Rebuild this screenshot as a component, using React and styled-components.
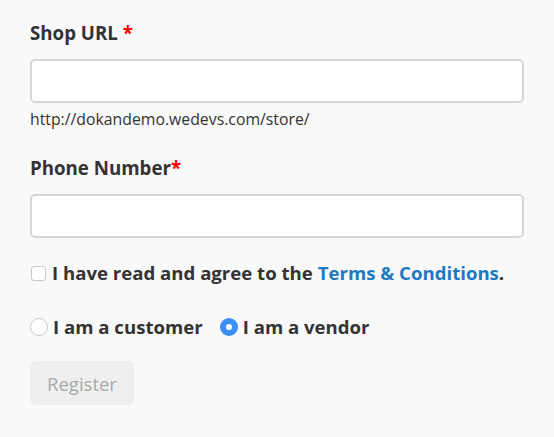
import React from "react";
import styled, { createGlobalStyle } from "styled-components";

const GlobalStyle = createGlobalStyle`
    html, body {
        margin: 0;
        padding: 0;
        background: #f9f9f9;
    }
    body {
        font-family: "Open Sans", "Liberation Sans", sans-serif;
        color: #333;
    }
`;

const Form = styled.form`
    padding: 20px 30px 0 30px;
    width: 494px;
`;

const Field = styled.div`
    margin-bottom: ${(p) => p.gap || 0}px;
`;

const Label = styled.label`
    display: block;
    font-size: 18.7px;
    font-weight: 700;
    line-height: 26px;
    color: #333;
    margin-bottom: 13px;
`;

const Required = styled.span`
    color: #f00;
    margin-left: ${(p) => (p.spaced ? "5px" : "0")};
`;

const Input = styled.input`
    display: block;
    box-sizing: border-box;
    width: 494px;
    height: 44px;
    border: 2px solid #d6d6d6;
    border-radius: 5px;
    background: #fff;
    font: inherit;
    padding: 0 10px;
    outline: none;
`;

const Hint = styled.div`
    font-size: 15.8px;
    line-height: 20px;
    margin-top: 6px;
    color: #333;
`;

const CheckRow = styled.label`
    display: flex;
    align-items: center;
    font-size: 18.6px;
    font-weight: 700;
    line-height: 26px;
    color: #333;
    margin-bottom: ${(p) => p.gap || 0}px;
`;

const Box = styled.span`
    box-sizing: border-box;
    width: 15px;
    height: 15px;
    border: 1.5px solid #c8c8c8;
    border-radius: 3px;
    background: #fff;
    margin: 1px 6px 0 1px;
    flex-shrink: 0;
`;

const Radio = styled.span`
    box-sizing: border-box;
    width: 18px;
    height: 18px;
    border-radius: 50%;
    flex-shrink: 0;
    margin-right: 5px;
    background: ${(p) => (p.checked ? "#3a8ef6" : "#fff")};
    border: ${(p) => (p.checked ? "none" : "1.5px solid #c8c8c8")};
    display: flex;
    align-items: center;
    justify-content: center;
    &::after {
        content: "";
        display: ${(p) => (p.checked ? "block" : "none")};
        width: 6px;
        height: 6px;
        border-radius: 50%;
        background: #fff;
    }
`;

const RadioGroup = styled.div`
    display: flex;
    align-items: center;
    gap: 17px;
    margin-bottom: 21px;
`;

const Link = styled.a`
    color: #1e78c2;
    text-decoration: none;
    margin-left: 5px;
`;

const Button = styled.button`
    display: block;
    width: 104px;
    height: 44px;
    border: none;
    border-radius: 5px;
    background: #efefef;
    color: #a9a9a9;
    font-family: inherit;
    font-size: 18.5px;
    padding: 0;
`;

export default function App() {
    return (
        <>
            <GlobalStyle />
            <Form onSubmit={(e) => e.preventDefault()}>
                <Field gap={26}>
                    <Label>
                        Shop URL<Required spaced>*</Required>
                    </Label>
                    <Input type="text" />
                    <Hint>http://dokandemo.wedevs.com/store/</Hint>
                </Field>
                <Field gap={22}>
                    <Label>
                        Phone Number<Required>*</Required>
                    </Label>
                    <Input type="text" />
                </Field>
                <CheckRow gap={28}>
                    <Box />
                    I have read and agree to the
                    <Link href="#">Terms &amp; Conditions</Link>.
                </CheckRow>
                <RadioGroup>
                    <CheckRow>
                        <Radio />
                        I am a customer
                    </CheckRow>
                    <CheckRow>
                        <Radio checked />
                        I am a vendor
                    </CheckRow>
                </RadioGroup>
                <Button type="button" disabled>
                    Register
                </Button>
            </Form>
        </>
    );
}
